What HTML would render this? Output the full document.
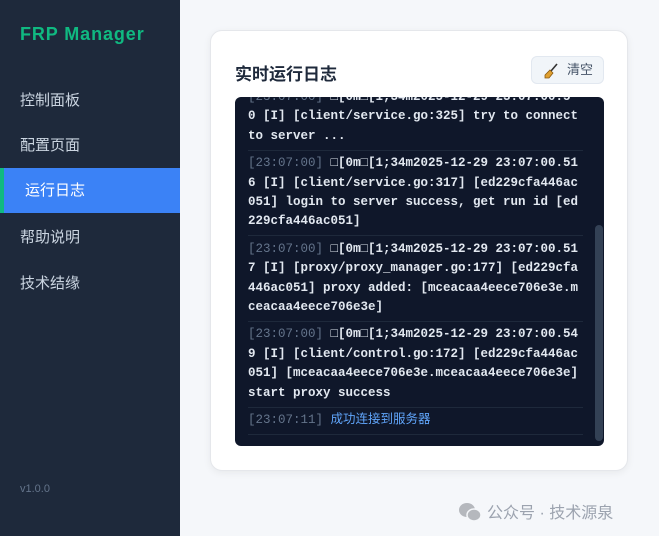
<!DOCTYPE html>
<html><head><meta charset="utf-8"><style>
*{margin:0;padding:0;box-sizing:border-box}
body{width:659px;height:536px;overflow:hidden;background:#f5f7fa;font-family:"Liberation Sans","Noto Sans CJK SC",sans-serif;position:relative}
.side{position:absolute;left:0;top:0;width:180px;height:536px;background:#1e293b}
.logo{position:absolute;left:20px;top:24px;color:#10b981;font-weight:bold;font-size:18px;letter-spacing:0.9px}
.mi{position:absolute;left:20px;color:#cbd5e1;font-size:15px;line-height:20px}
.act{position:absolute;left:0;top:168px;width:180px;height:45px;background:#3b82f6;border-left:4px solid #10b981}
.act span{position:absolute;left:21px;top:13px;color:#fff;font-size:15px;line-height:20px}
.ver{position:absolute;left:20px;top:483px;color:#64748b;font-size:11px}
.card{position:absolute;left:210px;top:30px;width:418px;height:441px;background:#fff;border-radius:12px;border:1px solid #e5e7eb;box-shadow:0 2px 8px rgba(0,0,0,.06)}
.title{position:absolute;left:235px;top:60px;font-size:17px;font-weight:bold;color:#1e293b}
.btn{position:absolute;left:531px;top:56px;width:73px;height:28px;background:#f1f5f9;border:1px solid #e2e8f0;border-radius:6px;font-size:13px;color:#475569;line-height:26px}
.btn span{position:absolute;left:35px}
.log{position:absolute;left:235px;top:97px;width:369px;height:349px;background:#0f172a;border-radius:6px;overflow:hidden}
.inner{position:absolute;left:13px;top:-12.5px;width:335px;font-family:"Liberation Mono","DejaVu Sans Mono","Noto Sans CJK SC",monospace;font-size:12.5px;line-height:19.4px;color:#e2e8f0;font-weight:bold;white-space:nowrap}
.e{padding:3.5px 0;border-bottom:1px solid #1e293b}
.t{color:#64748b;font-weight:normal}
.sb{position:absolute;left:595px;top:225px;width:8px;height:216px;background:#334155;border-radius:4px}
.wm{position:absolute;left:458px;top:499px;font-size:16px;color:#9ca3af}
</style></head><body>
<div class="side">
<div class="logo">FRP Manager</div>
<div class="mi" style="top:91px">控制面板</div>
<div class="mi" style="top:136px">配置页面</div>
<div class="act"><span>运行日志</span></div>
<div class="mi" style="top:228px">帮助说明</div>
<div class="mi" style="top:274px">技术结缘</div>
<div class="ver">v1.0.0</div>
</div>
<div class="card"></div>
<div class="title">实时运行日志</div>
<div class="btn"><svg style="position:absolute;left:11px;top:6px" width="16" height="16" viewBox="0 0 16 16"><path d="M14 1 L8 8" stroke="#333" stroke-width="1.6"/><path d="M7 7 L10 10 L6 15 L2 15 L2 12 Z" fill="#e0a030" stroke="#8a5a10" stroke-width="0.8"/></svg><span>清空</span></div>
<div class="log"><div class="inner">
<div class="e"><span class="t">[23:07:00]</span> □[0m□[1;34m2025-12-29 23:07:00.5<br>0 [I] [client/service.go:325] try to connect<br>to server ...</div>
<div class="e"><span class="t">[23:07:00]</span> □[0m□[1;34m2025-12-29 23:07:00.51<br>6 [I] [client/service.go:317] [ed229cfa446ac<br>051] login to server success, get run id [ed<br>229cfa446ac051]</div>
<div class="e"><span class="t">[23:07:00]</span> □[0m□[1;34m2025-12-29 23:07:00.51<br>7 [I] [proxy/proxy_manager.go:177] [ed229cfa<br>446ac051] proxy added: [mceacaa4eece706e3e.m<br>ceacaa4eece706e3e]</div>
<div class="e"><span class="t">[23:07:00]</span> □[0m□[1;34m2025-12-29 23:07:00.54<br>9 [I] [client/control.go:172] [ed229cfa446ac<br>051] [mceacaa4eece706e3e.mceacaa4eece706e3e]<br>start proxy success</div>
<div class="e"><span class="t">[23:07:11]</span> <span style="color:#60a5fa;font-weight:normal">成功连接到服务器</span></div>
</div></div>
<div class="sb"></div>
<div class="wm"><svg style="vertical-align:-4px;margin-right:5px" width="24" height="20" viewBox="0 0 24 20"><ellipse cx="9" cy="8" rx="8" ry="7" fill="#b5b8bd"/><ellipse cx="16" cy="13" rx="7" ry="6" fill="#b5b8bd" stroke="#f5f7fa" stroke-width="1.5"/></svg>公众号 · 技术源泉</div>
</body></html>
